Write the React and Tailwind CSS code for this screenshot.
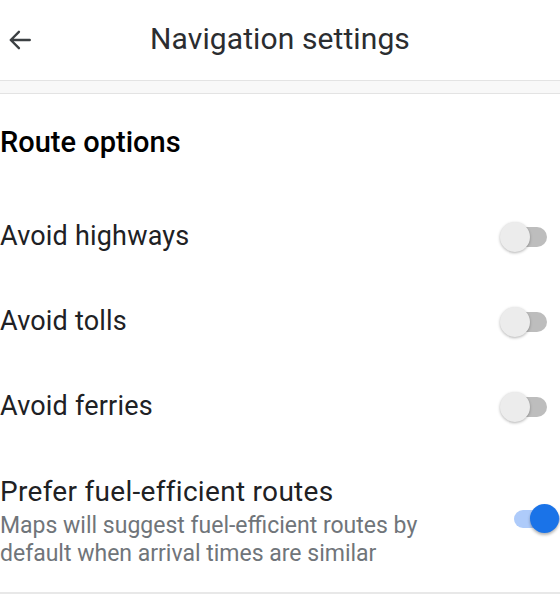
import React, { useState } from 'react';

const Toggle = ({ on, onClick }) => (
  <button onClick={onClick} className="relative w-[58px] h-[30px] flex items-center shrink-0">
    {on ? (
      <>
        <span className="absolute left-[12px] right-0 h-[18px] rounded-full bg-[#aecbfa]" />
        <span className="absolute right-[1px] w-[29px] h-[29px] rounded-full bg-[#1a73e8] shadow-[0_2px_3px_rgba(0,0,0,0.3)]" />
      </>
    ) : (
      <>
        <span className="absolute left-[2px] w-[46px] h-[20px] rounded-full bg-[#bdbdbd]" />
        <span className="absolute left-[1px] w-[30px] h-[30px] rounded-full bg-[#ececec] shadow-[0_1px_3px_rgba(0,0,0,0.3)]" />
      </>
    )}
  </button>
);

const App = () => {
  const [opts, setOpts] = useState({ highways: false, tolls: false, ferries: false, fuel: true });
  const flip = (k) => setOpts({ ...opts, [k]: !opts[k] });

  const rows = [
    { key: 'highways', label: 'Avoid highways' },
    { key: 'tolls', label: 'Avoid tolls' },
    { key: 'ferries', label: 'Avoid ferries' },
  ];

  return (
    <div className="w-[560px] h-[600px] bg-white overflow-hidden font-['Roboto',sans-serif] text-[#202124]">
      <header className="h-[81px] grid grid-cols-[56px_1fr_56px] items-center border-b border-[#e3e3e3]">
        <button className="pl-[7px] flex items-center">
          <svg width="26" height="26" viewBox="0 0 24 24" fill="none" stroke="#3c4043" strokeWidth="2.2" strokeLinecap="round" strokeLinejoin="round">
            <path d="M21 12H3.5M11 4.5L3.5 12l7.5 7.5" />
          </svg>
        </button>
        <h1 className="text-center text-[30px] leading-none pb-[3px] text-[#2b2d30] tracking-[0.1px]">Navigation settings</h1>
        <div />
      </header>
      <div className="h-[13px] bg-[#f8f8f8] border-b border-[#e3e3e3]" />

      <main>
        <h2 className="h-[100px] flex items-center text-[29px] font-medium text-black pb-[3px]">Route options</h2>

        {rows.map((r) => (
          <div key={r.key} className="h-[85px] flex items-center justify-between pr-[3px]">
            <span className="text-[27px] tracking-[0.2px]">{r.label}</span>
            <Toggle on={opts[r.key]} onClick={() => flip(r.key)} />
          </div>
        ))}

        <div className="flex items-center justify-between pt-[26px] pb-[24px] border-b-2 border-[#e8e8e8]">
          <div>
            <div className="text-[28px] leading-[34px] tracking-[0.3px]">Prefer fuel-efficient routes</div>
            <div className="text-[23px] leading-[28px] text-[#70757a] mt-[3px]">
              Maps will suggest fuel-efficient routes by<br />default when arrival times are similar
            </div>
          </div>
          <div className="-mt-[6px]">
            <Toggle on={opts.fuel} onClick={() => flip('fuel')} />
          </div>
        </div>
      </main>
    </div>
  );
};

export default App;
